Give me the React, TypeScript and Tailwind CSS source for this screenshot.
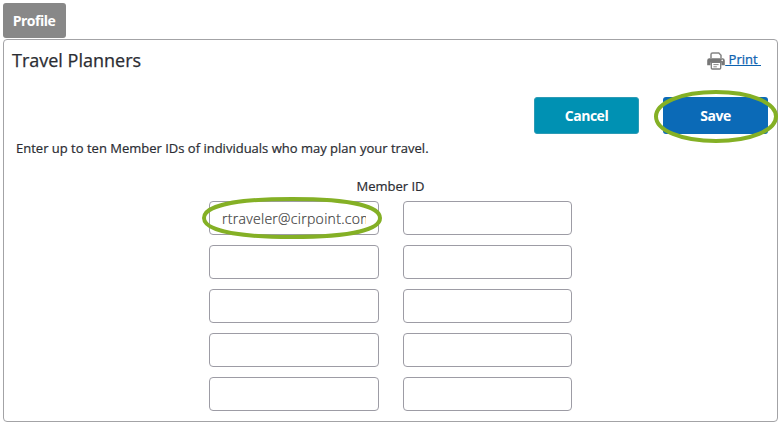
import { useState } from "react";

const ROWS = 5;

function PrinterIcon() {
  return (
    <svg width="18" height="18" viewBox="0 0 18 18" fill="none" className="shrink-0">
      <path d="M4 6V2.6Q4 1 5.6 1H11.8L14 3.2V6" stroke="#858585" strokeWidth="1.5" />
      <path d="M2.4 6.2H15.6Q17.8 6.2 17.8 8.4V13.2H14.4V10.4H3.6V13.2H.2V8.4Q.2 6.2 2.4 6.2Z" fill="#777" />
      <path d="M4.3 10.4H13.7V16Q13.7 17 12.7 17H5.3Q4.3 17 4.3 16Z" fill="#fff" stroke="#7c7c7c" strokeWidth="1.3" />
      <path d="M6.4 12.6H11.6M6.4 14.8H9.8" stroke="#888" strokeWidth="1" />
      <circle cx="15.2" cy="8.4" r=".8" fill="#fff" />
    </svg>
  );
}

interface HighlightProps {
  width: number;
  height: number;
  curve?: number;
  className: string;
}

// Green callout ring drawn over a control; a larger curve flattens the top and bottom
function Highlight({ width, height, curve = 0.58, className }: HighlightProps) {
  const l = 2;
  const r = width - 2;
  const t = 2;
  const b = height - 2;
  const cx = width / 2;
  const cy = height / 2;
  const dx = (cx - 2) * curve;
  const dy = (cy - 2) * 0.56;
  const d = `M${l} ${cy}C${l} ${cy - dy} ${cx - dx} ${t} ${cx} ${t}S${r} ${cy - dy} ${r} ${cy}S${cx + dx} ${b} ${cx} ${b}S${l} ${cy + dy} ${l} ${cy}Z`;

  return (
    <svg width={width} height={height} className={`absolute z-10 max-w-none pointer-events-none ${className}`}>
      <path d={d} fill="none" stroke="#84b025" strokeWidth="4" />
    </svg>
  );
}

export default function App() {
  const [members, setMembers] = useState<string[]>(() =>
    Array.from({ length: ROWS * 2 }, (_, i) => (i === 0 ? "rtraveler@cirpoint.com" : ""))
  );

  const updateMember = (index: number, value: string) => {
    setMembers((prev) => prev.map((m, i) => (i === index ? value : m)));
  };

  return (
    <div className="w-[780px] h-[425px] pl-[3px] pt-[3px] bg-white overflow-hidden font-['Open_Sans',sans-serif] text-[#2b2d33]">
      <div className="w-[63px] h-[35px] pr-px rounded-[3px] bg-[#888] text-white text-[14px] font-bold tracking-[-0.5px] flex items-center justify-center">
        Profile
      </div>

      <div className="mt-px w-[775px] h-[383px] rounded-[4px] border border-[#a3a3a6]">
        <div className="h-[41px] pl-2 pr-4 flex items-center justify-between">
          <h1 className="-mt-0.5 text-[18px] leading-6 font-medium [-webkit-text-stroke:0.25px_#2b2d33]">Travel Planners</h1>
          <a href="#" className="flex items-center text-[13px] font-medium text-[#0d62b0] [-webkit-text-stroke:0.25px_#0d62b0]">
            <PrinterIcon />
            <span className="-mt-0.5 underline whitespace-pre"> Print </span>
          </a>
        </div>

        <div className="mt-4 pr-[9px] flex justify-end gap-6">
          <button className="w-[105px] h-[37px] rounded-[3px] border border-[#2c9bb5] bg-[#0091b3] text-white text-[14px] font-bold tracking-[-0.5px]">
            Cancel
          </button>
          <div className="relative">
            <button className="w-[105px] h-[37px] rounded-[3px] bg-[#0b6ab7] text-white text-[14px] font-bold tracking-[-0.5px]">
              Save
            </button>
            <Highlight width={124} height={53} className="-left-[9px] -top-[7px]" />
          </div>
        </div>

        <p className="pl-3 mt-1 text-[13px] leading-5 font-medium [-webkit-text-stroke:0.2px_#2b2d33]">
          Enter up to ten Member IDs of individuals who may plan your travel.
        </p>

        <div className="ml-[205px] mt-[18px] w-[363px]">
          <div className="text-center text-[13px] leading-5 font-medium [-webkit-text-stroke:0.2px_#2b2d33]">Member ID</div>
          <div className="relative mt-[5px] grid grid-cols-[170px_169px] gap-x-6 gap-y-2.5">
            {members.map((member, i) => (
              <input
                key={i}
                type="text"
                aria-label={`Member ID ${i + 1}`}
                value={member}
                onChange={(e) => updateMember(i, e.target.value)}
                className="w-full h-[34px] px-3 rounded-[4px] border border-[#9d9ca5] bg-white text-[14px] font-light tracking-[0.3px] text-[#404040] [-webkit-text-stroke:0.2px_#404040] outline-none"
              />
            ))}
            <Highlight width={180} height={42} curve={0.72} className="-left-[7px] -top-1" />
          </div>
        </div>
      </div>
    </div>
  );
}
